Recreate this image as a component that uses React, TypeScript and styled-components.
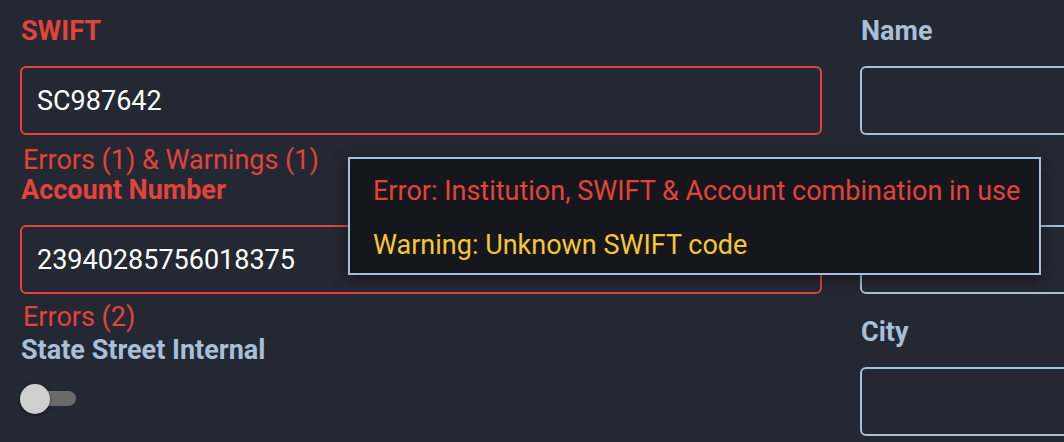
import styled, { createGlobalStyle } from 'styled-components';

const GlobalStyle = createGlobalStyle`
  html, body {
    margin: 0;
    padding: 0;
    background: #242833;
    overflow: hidden;
  }
  body {
    font-family: Roboto, 'Liberation Sans', sans-serif;
  }
`;

const RED = '#e2433a';
const STEEL = '#a8bfd8';

const Page = styled.div`
  position: relative;
  width: 1064px;
  height: 442px;
  overflow: hidden;
  padding: 16px 0 0 20px;
  box-sizing: border-box;
`;

const Columns = styled.div`
  display: grid;
  grid-template-columns: 802px 802px;
  column-gap: 38px;
  align-items: start;
`;

const Column = styled.div`
  display: flex;
  flex-direction: column;
`;

const Field = styled.div<{ $after?: number }>`
  display: flex;
  flex-direction: column;
  margin-bottom: ${(p) => p.$after ?? 0}px;
`;

const Label = styled.label<{ $error?: boolean; $top?: number }>`
  font-size: 27px;
  line-height: 30px;
  font-weight: 700;
  color: ${(p) => (p.$error ? RED : STEEL)};
  margin: ${(p) => p.$top ?? 0}px 0 0 1px;
`;

const Input = styled.input<{ $error?: boolean }>`
  margin-top: 20px;
  height: 69px;
  box-sizing: border-box;
  border: 2px solid ${(p) => (p.$error ? RED : STEEL)};
  border-radius: 6px;
  background: transparent;
  color: #ffffff;
  font-family: Roboto, 'Liberation Sans', sans-serif;
  font-size: 27px;
  padding: 0 15px;
  outline: none;
`;

const Helper = styled.div<{ $top: number }>`
  margin-top: ${(p) => p.$top}px;
  margin-left: 3px;
  font-size: 27px;
  line-height: 30px;
  color: ${RED};
`;

const Switch = styled.div`
  position: relative;
  margin-top: 19px;
  width: 56px;
  height: 30px;
  display: flex;
  align-items: center;
`;

const Track = styled.div`
  width: 56px;
  height: 15px;
  margin-top: -2px;
  border-radius: 8px;
  background: #6a6a6a;
`;

const Thumb = styled.div`
  position: absolute;
  left: 0;
  top: 0;
  width: 30px;
  height: 30px;
  border-radius: 50%;
  background: #cfcfd0;
  box-shadow: 0 1px 3px rgba(0, 0, 0, 0.5);
`;

const Tooltip = styled.div`
  position: absolute;
  left: 348px;
  top: 157px;
  width: 693px;
  height: 118px;
  box-sizing: border-box;
  border: 2px solid ${STEEL};
  background: #16171c;
  padding: 17px 16px 0 23px;
  box-shadow: 0 4px 14px rgba(0, 0, 0, 0.45);
  display: flex;
  flex-direction: column;
  gap: 24px;
`;

const Message = styled.div<{ $tone: 'error' | 'warning' }>`
  font-size: 27px;
  line-height: 30px;
  white-space: nowrap;
  color: ${(p) => (p.$tone === 'error' ? RED : '#f4c735')};
`;

export default function App() {
  return (
    <>
      <GlobalStyle />
      <Page>
        <Columns>
          <Column>
            <Field>
              <Label $error>SWIFT</Label>
              <Input $error defaultValue="SC987642" />
              <Helper $top={10}>Errors (1) &amp; Warnings (1)</Helper>
            </Field>
            <Field>
              <Label $error>Account Number</Label>
              <Input $error defaultValue="23940285756018375" />
              <Helper $top={8}>Errors (2)</Helper>
            </Field>
            <Field>
              <Label $top={3}>State Street Internal</Label>
              <Switch>
                <Track />
                <Thumb />
              </Switch>
            </Field>
          </Column>
          <Column>
            <Field $after={40}>
              <Label>Name</Label>
              <Input />
            </Field>
            <Field $after={23}>
              <Label>Address</Label>
              <Input />
            </Field>
            <Field>
              <Label>City</Label>
              <Input />
            </Field>
          </Column>
        </Columns>
        <Tooltip>
          <Message $tone="error">Error: Institution, SWIFT &amp; Account combination in use</Message>
          <Message $tone="warning">Warning: Unknown SWIFT code</Message>
        </Tooltip>
      </Page>
    </>
  );
}
